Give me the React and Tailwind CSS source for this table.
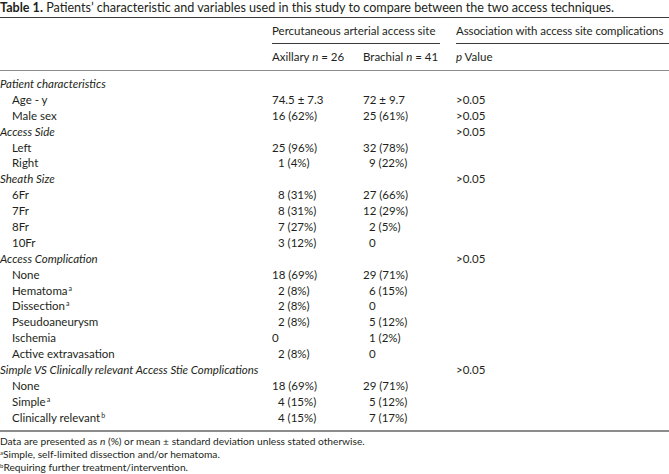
import React from "react";

const rows = [
    { cat: "Patient characteristics" },
    { label: "Age - y", a: "74.5 ± 7.3", b: "72 ± 9.7", p: ">0.05" },
    { label: "Male sex", a: "16 (62%)", b: "25 (61%)", p: ">0.05" },
    { cat: "Access Side", p: ">0.05" },
    { label: "Left", a: "25 (96%)", b: "32 (78%)" },
    { label: "Right", a: "1 (4%)", ai: true, b: "9 (22%)", bi: true },
    { cat: "Sheath Size", p: ">0.05" },
    { label: "6Fr", a: "8 (31%)", ai: true, b: "27 (66%)" },
    { label: "7Fr", a: "8 (31%)", ai: true, b: "12 (29%)" },
    { label: "8Fr", a: "7 (27%)", ai: true, b: "2 (5%)", bi: true },
    { label: "10Fr", a: "3 (12%)", ai: true, b: "0", bi: true },
    { cat: "Access Complication", p: ">0.05" },
    { label: "None", a: "18 (69%)", b: "29 (71%)" },
    { label: "Hematoma", sup: "a", a: "2 (8%)", ai: true, b: "6 (15%)", bi: true },
    { label: "Dissection", sup: "a", a: "2 (8%)", ai: true, b: "0", bi: true },
    { label: "Pseudoaneurysm", a: "2 (8%)", ai: true, b: "5 (12%)", bi: true },
    { label: "Ischemia", a: "0", b: "1 (2%)", bi: true },
    { label: "Active extravasation", a: "2 (8%)", ai: true, b: "0", bi: true },
    { cat: "Simple VS Clinically relevant Access Stie Complications", p: ">0.05" },
    { label: "None", a: "18 (69%)", b: "29 (71%)" },
    { label: "Simple", sup: "a", a: "4 (15%)", ai: true, b: "5 (12%)", bi: true },
    { label: "Clinically relevant", sup: "b", a: "4 (15%)", ai: true, b: "7 (17%)", bi: true },
];

const Sup = ({ children }) => (
    <sup className="text-[7px] relative -top-[4px] ml-[1px]">{children}</sup>
);

const Row = ({ row }) => (
    <div className="flex h-[15.9px] items-center whitespace-nowrap">
        <div className="w-[272px] shrink-0">
            {row.cat ? (
                <span className="italic">{row.cat}</span>
            ) : (
                <span className="pl-[12px]">
                    {row.label}
                    {row.sup && <Sup>{row.sup}</Sup>}
                </span>
            )}
        </div>
        <div className={`w-[91px] shrink-0 ${row.ai ? "pl-[6px]" : ""}`}>{row.a}</div>
        <div className={`w-[93px] shrink-0 ${row.bi ? "pl-[6px]" : ""}`}>{row.b}</div>
        <div className="w-[213px] shrink-0 text-left">{row.p}</div>
    </div>
);

export default function App() {
    return (
        <div className="w-[669px] h-[474px] bg-white text-[#231f20] font-['Lato',sans-serif] text-[11.5px] leading-[16px] overflow-hidden">
            {/* Caption */}
            <p className="whitespace-nowrap text-[12.6px]">
                <b>Table 1.</b> Patients’ characteristic and variables used in this study to compare between the two access techniques.
            </p>

            <div className="mt-[1px] border-t border-[#3a3a3a]">
                {/* Header row 1 */}
                <div className="flex whitespace-nowrap">
                    <div className="w-[272px] shrink-0" />
                    <div className="w-[168px] shrink-0 pt-[5px] pb-[4px] border-b border-[#3a3a3a]">
                        Percutaneous arterial access site
                    </div>
                    <div className="w-[16px] shrink-0" />
                    <div className="w-[213px] shrink-0 pt-[5px] pb-[4px] border-b border-[#3a3a3a] tracking-[-0.1px]">
                        Association with access site complications
                    </div>
                </div>

                {/* Header row 2 */}
                <div className="flex pt-[5px] pb-[5px] border-b border-[#8c8c8c] whitespace-nowrap">
                    <div className="w-[272px] shrink-0" />
                    <div className="w-[91px] shrink-0">
                        Axillary <i>n</i> = 26
                    </div>
                    <div className="w-[93px] shrink-0">
                        Brachial <i>n</i> = 41
                    </div>
                    <div className="w-[213px] shrink-0">
                        <i>p</i> Value
                    </div>
                </div>

                {/* Body */}
                <div className="pt-[5px] pb-[4px] border-b-2 border-[#8c8c8c]">
                    {rows.map((row, i) => (
                        <Row key={i} row={row} />
                    ))}
                </div>

                {/* Footnotes */}
                <div className="pt-[3px] text-[10.2px] leading-[13px] whitespace-nowrap">
                    <p>
                        Data are presented as <i>n</i> (%) or mean ± standard deviation unless stated otherwise.
                    </p>
                    <p>
                        <sup className="text-[6px] relative -top-[3px]">a</sup>Simple, self-limited dissection and/or hematoma.
                    </p>
                    <p>
                        <sup className="text-[6px] relative -top-[3px]">b</sup>Requiring further treatment/intervention.
                    </p>
                </div>
            </div>
        </div>
    );
}
